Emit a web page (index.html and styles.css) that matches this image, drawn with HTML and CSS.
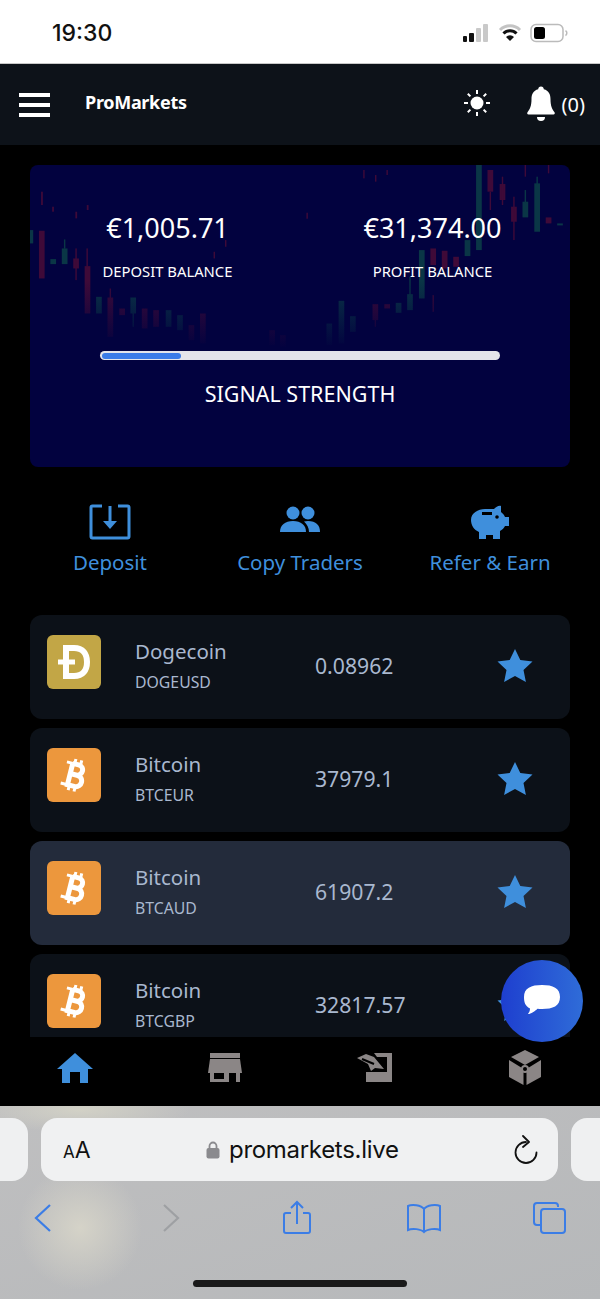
FILE: index.html
```html
<!DOCTYPE html>
<html lang="en">

<head>
    <meta charset="UTF-8">
    <meta name="viewport" content="width=device-width, initial-scale=1.0">
    <title>ProMarkets</title>
    <link rel="stylesheet" href="styles.css">
</head>

<body>
    <div class="phone">
        <div class="status-bar">
            <span class="clock">19:30</span>
            <div class="status-icons">
                <svg width="28" height="20" viewBox="0 0 28 20">
                    <rect x="1" y="13" width="4" height="6" rx="1" fill="#111" />
                    <rect x="7" y="10" width="5" height="9" rx="1" fill="#111" />
                    <rect x="14" y="5" width="5" height="14" rx="1" fill="#c9c9c9" />
                    <rect x="21" y="1" width="5" height="18" rx="1" fill="#c9c9c9" />
                </svg>
                <svg width="24" height="20" viewBox="0 0 24 20">
                    <path d="M2 7a14 14 0 0 1 20 0" fill="none" stroke="#c4c4c4" stroke-width="3" />
                    <path d="M5.500 10.500a9 9 0 0 1 13 0" fill="none" stroke="#111" stroke-width="3" />
                    <path d="M12 18l-4-4a5.500 5.500 0 0 1 8 0z" fill="#111" />
                </svg>
                <svg width="38" height="20" viewBox="0 0 38 20">
                    <rect x="1" y="1.500" width="32" height="17" rx="5" fill="none" stroke="#bbb" stroke-width="1.500" />
                    <rect x="4" y="4" width="11" height="12" rx="2.500" fill="#000" />
                    <path d="M35.500 7.500a3 3 0 0 1 0 5" fill="none" stroke="#bbb" stroke-width="1.500" />
                </svg>
            </div>
        </div>

        <header class="navbar">
            <div class="hamburger"><span></span><span></span><span></span></div>
            <span class="brand">ProMarkets</span>
            <svg class="sun" width="28" height="28" viewBox="0 0 28 28">
                <circle cx="14" cy="14" r="6.500" fill="#fff" />
                <path d="M14 1v4M14 23v4M1 14h4M23 14h4M4.800 4.800l2.600 2.600M20.600 20.600l2.600 2.600M4.800 23.200l2.600-2.600M20.600 7.400l2.600-2.600" stroke="#fff" stroke-width="2" />
            </svg>
            <svg class="bell" width="30" height="38" viewBox="0 0 30 38">
                <path d="M15 1.500c1.700 0 2.800 1.200 2.800 2.800 5 1.200 6.700 5.200 6.700 10 0 6.500 1.500 10 4 13 .7 1 .2 2.200-1 2.200H2.500c-1.200 0-1.700-1.200-1-2.200 2.500-3 4-6.500 4-13 0-4.800 1.700-8.800 6.700-10 0-1.600 1.100-2.800 2.800-2.800z" fill="#fff" />
                <path d="M11 32h8a4 4 0 0 1-8 0z" fill="#fff" />
            </svg>
            <span class="bell-count">(0)</span>
        </header>

        <main class="content">
            <section class="hero">
                <svg class="chart" viewBox="30 15 1512 905" preserveAspectRatio="none">
                    <defs>
                        <linearGradient id="chartFade" x1="0" y1="0" x2="0" y2="1">
                            <stop offset="0" stop-color="#02023f" stop-opacity="0" />
                            <stop offset="1" stop-color="#02023f" />
                        </linearGradient>
                    </defs>
                    <g class="down">
                        <rect x="55" y="212" width="16" height="143" />
                        <rect x="61" y="95" width="5" height="40" />
                        <rect x="92" y="140" width="5" height="15" />
                        <rect x="157" y="155" width="5" height="20" />
                        <rect x="189" y="135" width="5" height="15" />
                        <rect x="151" y="295" width="16" height="30" />
                        <rect x="157" y="265" width="4" height="95" />
                        <rect x="183" y="318" width="16" height="142" />
                        <rect x="188" y="265" width="4" height="55" />
                        <rect x="247" y="412" width="16" height="118" />
                        <rect x="253" y="385" width="4" height="30" />
                        <rect x="280" y="445" width="16" height="20" />
                        <rect x="343" y="445" width="16" height="60" />
                        <rect x="375" y="450" width="16" height="50" />
                        <rect x="474" y="495" width="16" height="45" />
                        <rect x="506" y="460" width="16" height="90" />
                        <rect x="700" y="510" width="16" height="45" />
                        <rect x="730" y="525" width="16" height="35" />
                        <rect x="576" y="240" width="4" height="20" />
                        <rect x="544" y="275" width="4" height="20" />
                        <rect x="804" y="158" width="4" height="18" />
                        <rect x="963" y="30" width="4" height="25" />
                        <rect x="996" y="45" width="4" height="20" />
                        <rect x="1028" y="30" width="4" height="15" />
                        <rect x="989" y="432" width="16" height="48" />
                        <rect x="995" y="478" width="4" height="22" />
                        <rect x="1022" y="432" width="16" height="13" />
                        <rect x="1151" y="265" width="16" height="50" />
                        <rect x="1157" y="405" width="4" height="50" />
                        <rect x="1183" y="272" width="16" height="53" />
                        <rect x="1215" y="290" width="16" height="30" />
                        <rect x="1311" y="30" width="16" height="65" />
                        <rect x="1317" y="95" width="4" height="55" />
                        <rect x="1345" y="72" width="16" height="48" />
                        <rect x="1351" y="50" width="4" height="85" />
                        <rect x="1377" y="140" width="16" height="45" />
                        <rect x="1383" y="110" width="4" height="130" />
                        <rect x="1415" y="15" width="4" height="35" />
                        <rect x="1474" y="172" width="16" height="18" />
                        <rect x="1480" y="15" width="4" height="25" />
                    </g>
                    <g class="up">
                        <rect x="30" y="210" width="9" height="40" />
                        <rect x="87" y="297" width="16" height="15" />
                        <rect x="119" y="265" width="16" height="47" />
                        <rect x="125" y="238" width="4" height="28" />
                        <rect x="215" y="410" width="16" height="50" />
                        <rect x="311" y="412" width="16" height="48" />
                        <rect x="317" y="458" width="4" height="42" />
                        <rect x="410" y="450" width="16" height="50" />
                        <rect x="442" y="465" width="16" height="45" />
                        <rect x="860" y="490" width="16" height="65" />
                        <rect x="894" y="422" width="16" height="128" />
                        <rect x="926" y="468" width="16" height="47" />
                        <rect x="1054" y="428" width="16" height="30" />
                        <rect x="1086" y="402" width="16" height="48" />
                        <rect x="1092" y="350" width="4" height="55" />
                        <rect x="1119" y="270" width="16" height="145" />
                        <rect x="1247" y="240" width="16" height="48" />
                        <rect x="1279" y="15" width="16" height="255" />
                        <rect x="1409" y="125" width="16" height="47" />
                        <rect x="1415" y="90" width="4" height="36" />
                        <rect x="1442" y="70" width="16" height="145" />
                        <rect x="1448" y="50" width="4" height="22" />
                        <rect x="1506" y="190" width="16" height="6" />
                    </g>
                    <rect x="30" y="360" width="1512" height="205" fill="url(#chartFade)" />
                </svg>
                <div class="balances">
                    <div class="balance">
                        <div class="amount">€1,005.71</div>
                        <div class="balance-label">DEPOSIT BALANCE</div>
                    </div>
                    <div class="balance">
                        <div class="amount">€31,374.00</div>
                        <div class="balance-label">PROFIT BALANCE</div>
                    </div>
                </div>
                <div class="signal-track"><div class="signal-fill"></div></div>
                <div class="signal-label">SIGNAL STRENGTH</div>
            </section>

            <section class="actions">
                <div class="action">
                    <svg width="42" height="36" viewBox="0 0 42 36">
                        <path d="M13 2H3.500A1.500 1.500 0 0 0 2 3.500v29A1.500 1.500 0 0 0 3.500 34h35a1.500 1.500 0 0 0 1.500-1.500v-29A1.500 1.500 0 0 0 38.500 2H29" fill="none" stroke="#3f8fdc" stroke-width="3" />
                        <path d="M21 2v17" stroke="#3f8fdc" stroke-width="3" />
                        <path d="M14 17h14l-7 8z" fill="#3f8fdc" />
                    </svg>
                    <span>Deposit</span>
                </div>
                <div class="action">
                    <svg width="42" height="36" viewBox="0 0 42 36">
                        <circle cx="14" cy="9" r="6.500" fill="#3f8fdc" />
                        <circle cx="29" cy="9" r="6.500" fill="#3f8fdc" />
                        <path d="M1 28c0-7 5-11 13-11s13 4 13 11z" fill="#3f8fdc" />
                        <path d="M25 17.500c1.300-.3 2.600-.5 4-.5 8 0 12 4 12 11H30c0-4-2-8-5-10.500z" fill="#3f8fdc" />
                    </svg>
                    <span>Copy Traders</span>
                </div>
                <div class="action">
                    <svg width="38" height="36" viewBox="0 0 38 36">
                        <path d="M23 5c2-2 5-4 7-3v6c2 1.500 3 3 4 5h4v9h-4c-1 2-3 4-5 5v8h-7v-4h-7v4H8v-7C3 26 0 21 0 16 0 9 7 5 14 5z" fill="#3f8fdc" />
                        <rect x="11" y="8" width="10" height="3" fill="#000" />
                        <circle cx="26" cy="13" r="1.800" fill="#000" />
                    </svg>
                    <span>Refer &amp; Earn</span>
                </div>
            </section>

            <section class="markets">
                <div class="market">
                    <div class="coin doge">
                        <svg width="34" height="36" viewBox="0 0 34 36">
                            <path d="M9 4h8c9 0 13 6 13 14s-4 14-13 14H9z" fill="none" stroke="#fff" stroke-width="6" />
                            <path d="M1 18h17" stroke="#fff" stroke-width="5" />
                        </svg>
                    </div>
                    <div class="market-name">
                        <div class="name">Dogecoin</div>
                        <div class="symbol">DOGEUSD</div>
                    </div>
                    <div class="price">0.08962</div>
                    <svg class="star" width="36" height="34" viewBox="0 0 36 34"><path d="M18 1l5.300 11 12.200 1.600-9 8.400 2.400 12L18 28l-10.900 6 2.400-12-9-8.400L12.700 12z" /></svg>
                </div>
                <div class="market">
                    <div class="coin btc">
                        <svg width="28" height="36" viewBox="0 0 28 36">
                            <g transform="rotate(14 14 18)" fill="none" stroke="#fff">
                                <path d="M10 7h6c7 0 7 10.500 0 10.500h-6M10 17.500h7c8 0 8 11.500 0 11.500h-7V7" stroke-width="5" />
                                <path d="M4 7h6M3 29h7M12 2v5M18 2v5M12 29v5M18 29v5" stroke-width="3" />
                            </g>
                        </svg>
                    </div>
                    <div class="market-name">
                        <div class="name">Bitcoin</div>
                        <div class="symbol">BTCEUR</div>
                    </div>
                    <div class="price">37979.1</div>
                    <svg class="star" width="36" height="34" viewBox="0 0 36 34"><path d="M18 1l5.300 11 12.200 1.600-9 8.400 2.400 12L18 28l-10.900 6 2.400-12-9-8.400L12.700 12z" /></svg>
                </div>
                <div class="market selected">
                    <div class="coin btc">
                        <svg width="28" height="36" viewBox="0 0 28 36">
                            <g transform="rotate(14 14 18)" fill="none" stroke="#fff">
                                <path d="M10 7h6c7 0 7 10.500 0 10.500h-6M10 17.500h7c8 0 8 11.500 0 11.500h-7V7" stroke-width="5" />
                                <path d="M4 7h6M3 29h7M12 2v5M18 2v5M12 29v5M18 29v5" stroke-width="3" />
                            </g>
                        </svg>
                    </div>
                    <div class="market-name">
                        <div class="name">Bitcoin</div>
                        <div class="symbol">BTCAUD</div>
                    </div>
                    <div class="price">61907.2</div>
                    <svg class="star" width="36" height="34" viewBox="0 0 36 34"><path d="M18 1l5.300 11 12.200 1.600-9 8.400 2.400 12L18 28l-10.900 6 2.400-12-9-8.400L12.700 12z" /></svg>
                </div>
                <div class="market">
                    <div class="coin btc">
                        <svg width="28" height="36" viewBox="0 0 28 36">
                            <g transform="rotate(14 14 18)" fill="none" stroke="#fff">
                                <path d="M10 7h6c7 0 7 10.500 0 10.500h-6M10 17.500h7c8 0 8 11.500 0 11.500h-7V7" stroke-width="5" />
                                <path d="M4 7h6M3 29h7M12 2v5M18 2v5M12 29v5M18 29v5" stroke-width="3" />
                            </g>
                        </svg>
                    </div>
                    <div class="market-name">
                        <div class="name">Bitcoin</div>
                        <div class="symbol">BTCGBP</div>
                    </div>
                    <div class="price">32817.57</div>
                    <svg class="star" width="36" height="34" viewBox="0 0 36 34"><path d="M18 1l5.300 11 12.200 1.600-9 8.400 2.400 12L18 28l-10.900 6 2.400-12-9-8.400L12.700 12z" /></svg>
                </div>
            </section>
        </main>

        <nav class="tabbar">
            <svg width="36" height="32" viewBox="0 0 36 32">
                <path d="M18 1L0 17h5v14h8V20h10v11h8V17h5z" fill="#3f8fdc" />
            </svg>
            <svg width="34" height="30" viewBox="0 0 34 30">
                <rect x="2" y="0" width="30" height="5" fill="#8b8686" />
                <path d="M2 6h30l2 14H0z" fill="#8b8686" />
                <path d="M2 20h4v6h10v-6h5v9H2zM28 20h4v9h-4z" fill="#8b8686" />
            </svg>
            <svg width="36" height="30" viewBox="0 0 36 30">
                <path d="M17 0h18v29H9V19h21V4H20z" fill="#8b8686" />
                <path d="M0 5l9-4 8 3 10 12-9-1-4 3-3-7z" fill="#8b8686" />
                <path d="M5 6l12 5" stroke="#000" stroke-width="2" />
            </svg>
            <svg width="34" height="36" viewBox="0 0 34 36">
                <path d="M17 0l14 7-14 8L3 7z" fill="#8b8686" />
                <path d="M1 10l13 8c-.5 2 .5 4 1.500 4.500V35L1 27z" fill="#8b8686" />
                <path d="M33 10l-13 8c.5 2-.5 4-1.500 4.500V35L33 27z" fill="#8b8686" />
                <circle cx="17" cy="19" r="3" fill="none" stroke="#8b8686" stroke-width="2" />
            </svg>
        </nav>

        <div class="safari">
            <div class="tab-strip">
                <div class="tab-peek left"></div>
                <div class="address">
                    <span class="text-size"><small>A</small>A</span>
                    <span class="url">
                        <svg width="14" height="18" viewBox="0 0 14 18">
                            <path d="M3.500 8V5a3.500 3.500 0 0 1 7 0v3" fill="none" stroke="#8a8a8e" stroke-width="1.800" />
                            <rect x="0.500" y="7" width="13" height="10.500" rx="2" fill="#8a8a8e" />
                        </svg>
                        promarkets.live
                    </span>
                    <svg class="reload" width="24" height="30" viewBox="0 0 24 30">
                        <path d="M12 7A10.500 10.500 0 1 0 22.500 17.500" fill="none" stroke="#111" stroke-width="1.800" stroke-linecap="round" />
                        <path d="M9 1l6 6-6 5" fill="none" stroke="#111" stroke-width="1.800" stroke-linecap="round" stroke-linejoin="round" />
                    </svg>
                </div>
                <div class="tab-peek right"></div>
            </div>
            <div class="toolbar">
                <svg width="36" height="32" viewBox="0 0 36 32"><path d="M24 3L10 16l14 13" fill="none" stroke="#3b7de6" stroke-width="2.200" /></svg>
                <svg width="36" height="32" viewBox="0 0 36 32"><path d="M11 3l14 13-14 13" fill="none" stroke="#9ea0a3" stroke-width="2.200" /></svg>
                <svg width="36" height="36" viewBox="0 0 36 36">
                    <path d="M12 13H7a2 2 0 0 0-2 2v16a2 2 0 0 0 2 2h22a2 2 0 0 0 2-2V15a2 2 0 0 0-2-2h-5" fill="none" stroke="#3b7de6" stroke-width="2" />
                    <path d="M18 24V3M12 8l6-6 6 6" fill="none" stroke="#3b7de6" stroke-width="2" />
                </svg>
                <svg width="36" height="32" viewBox="0 0 36 32">
                    <path d="M18 7C15 3 6 2 2 4v24c4-2 13-1 16 2 3-3 12-4 16-2V4c-4-2-13-1-16 3zM18 7v23" fill="none" stroke="#3b7de6" stroke-width="2" />
                </svg>
                <svg width="36" height="34" viewBox="0 0 36 34">
                    <path d="M26 6V5a3 3 0 0 0-3-3H5a3 3 0 0 0-3 3v16a3 3 0 0 0 3 3h3" fill="none" stroke="#3b7de6" stroke-width="2" />
                    <rect x="9" y="8" width="24" height="24" rx="3" fill="none" stroke="#3b7de6" stroke-width="2" />
                </svg>
            </div>
            <div class="home-indicator"></div>
        </div>

        <div class="chat-button">
            <svg width="40" height="36" viewBox="0 0 40 36">
                <path d="M20 2c11 0 18 3 18 12S31 26 20 26c-1.500 0-3-.1-4.500-.3C13 28 9 31 6 31c1-1.500 2-3 2-5.500C3 23 2 19 2 14 2 5 9 2 20 2z" fill="#fff" />
            </svg>
        </div>
    </div>
</body>

</html>
```

FILE: styles.css
```css
* {
    box-sizing: border-box;
}

body {
    margin: 0;
    background-color: #000;
    font-family: "Noto Sans", sans-serif;
}

.phone {
    position: relative;
    display: flex;
    flex-direction: column;
    width: 600px;
    height: 1299px;
    overflow: hidden;
}

/* status bar */
.status-bar {
    display: flex;
    justify-content: space-between;
    align-items: center;
    height: 64px;
    padding: 2px 32px 0 52px;
    background-color: #fff;
    border-bottom: 1px solid #c8c8c8;
}

.clock {
    font-family: Inter, sans-serif;
    font-size: 23px;
    font-weight: 500;
    color: #111;
}

.status-icons {
    display: flex;
    align-items: center;
    gap: 8px;
}

/* navbar */
.navbar {
    display: flex;
    align-items: center;
    height: 81px;
    padding: 0 15px 0 19px;
    background-color: #0d1219;
    color: #fff;
}

.hamburger {
    display: flex;
    flex-direction: column;
    gap: 6px;
    width: 31px;
    margin-top: 1px;
}

.hamburger span {
    height: 4px;
    background-color: #fff;
}

.brand {
    margin-left: 35px;
    margin-right: auto;
    font-size: 18px;
    font-weight: 700;
    letter-spacing: -0.3px;
    margin-top: -6px;
}

.sun {
    margin-right: 35px;
    margin-top: -4px;
}

.bell {
    margin-top: -2px;
}

.bell-count {
    margin-left: 6px;
    font-size: 20px;
    margin-top: -1px;
}

/* main area */
.content {
    flex: 1;
    min-height: 0;
    overflow: hidden;
    padding: 20px 30px 0;
}

.hero {
    position: relative;
    height: 302px;
    padding-top: 45px;
    border-radius: 8px;
    overflow: hidden;
    background-color: #02023f;
    color: #fff;
    text-align: center;
}

.chart {
    position: absolute;
    top: 0;
    left: 0;
    width: 100%;
    height: 100%;
}

.chart .down {
    fill: #3f0a38;
}

.chart .up {
    fill: #0a3646;
}

.balances,
.signal-track,
.signal-label {
    position: relative;
}

.balances {
    display: grid;
    grid-template-columns: 1fr 1fr;
    padding: 0 5px;
}

.amount {
    font-size: 27px;
    line-height: 36px;
}

.balance-label {
    margin-top: 15px;
    font-size: 14.800px;
    line-height: 20px;
}

.signal-track {
    width: 400px;
    height: 9px;
    margin: 70px auto 0;
    padding: 1.500px;
    border-radius: 5px;
    background-color: #e4e4ea;
}

.signal-fill {
    width: 20%;
    height: 100%;
    border-radius: 3px;
    background-color: #3a7be8;
}

.signal-label {
    margin-top: 19px;
    font-size: 21.500px;
    line-height: 30px;
}

/* quick actions */
.actions {
    display: grid;
    grid-template-columns: repeat(3, 190px);
    margin: 37px -15px 0;
}

.action {
    display: flex;
    flex-direction: column;
    align-items: center;
    gap: 7px;
    color: #3f8fdc;
    font-size: 20.500px;
    line-height: 30px;
}

/* market rows */
.markets {
    display: flex;
    flex-direction: column;
    gap: 9px;
    margin-top: 38px;
}

.market {
    display: flex;
    align-items: center;
    flex-shrink: 0;
    height: 104px;
    padding: 0 17px;
    border-radius: 12px;
    background-color: #0c1118;
    color: #a9b8cf;
}

.market.selected {
    background-color: #232b3b;
}

.coin {
    display: flex;
    justify-content: center;
    align-items: center;
    width: 54px;
    height: 54px;
    margin-top: -10px;
    border-radius: 6px;
}

.coin.doge {
    background-color: #c2a646;
}

.coin.btc {
    background-color: #ec973d;
}

.market-name {
    width: 180px;
    margin-left: 34px;
    margin-top: -6px;
}

.name {
    font-size: 20.500px;
    line-height: 28px;
}

.symbol {
    margin-top: 7px;
    font-size: 15.800px;
    line-height: 20px;
}

.price {
    width: 165px;
    font-size: 21.200px;
    margin-top: -4px;
}

.star {
    margin-left: 17px;
    margin-top: -4px;
    fill: #3f8fdc;
}

/* bottom tabs */
.tabbar {
    display: grid;
    grid-template-columns: repeat(4, 150px);
    justify-items: center;
    align-items: center;
    height: 69px;
    padding-bottom: 7px;
    background-color: #000;
}

/* browser chrome */
.safari {
    height: 193px;
    padding-top: 12px;
    background:
        radial-gradient(circle at 80px 122px, #d5d3c8 0, rgba(213, 211, 200, 0) 62px),
        radial-gradient(ellipse 110px 22px at 80px 4px, #d2d1c6 0, rgba(210, 209, 198, 0) 100%),
        linear-gradient(to bottom right, #bfbfc0, #b6b8ba);
}

.tab-strip {
    display: flex;
    gap: 13px;
    height: 63px;
}

.tab-peek {
    width: 28px;
    background-color: #eff0f1;
}

.tab-peek.left {
    border-radius: 0 16px 16px 0;
}

.tab-peek.right {
    width: 29px;
    border-radius: 16px 0 0 16px;
}

.address {
    position: relative;
    flex: 1;
    display: flex;
    justify-content: space-between;
    align-items: center;
    padding: 0 20px 0 22px;
    border-radius: 16px;
    background-color: #f0f1f2;
    color: #111;
    font-family: Inter, sans-serif;
}

.text-size {
    font-size: 23px;
}

.text-size small {
    font-size: 17px;
}

.url {
    display: flex;
    align-items: center;
    gap: 9px;
    font-size: 24px;
    letter-spacing: -0.3px;
}

.toolbar {
    display: flex;
    justify-content: space-between;
    align-items: center;
    height: 46px;
    margin-top: 14px;
    padding: 0 32px 0 26px;
}

.home-indicator {
    width: 214px;
    height: 7px;
    margin: 39px auto 0;
    border-radius: 4px;
    background-color: #1a1a1a;
}

/* floating chat */
.chat-button {
    position: absolute;
    left: 501px;
    top: 960px;
    display: flex;
    justify-content: center;
    align-items: center;
    width: 82px;
    height: 82px;
    border-radius: 50%;
    background: linear-gradient(to right, #1e3fcf, #2f6cd8);
}
```
